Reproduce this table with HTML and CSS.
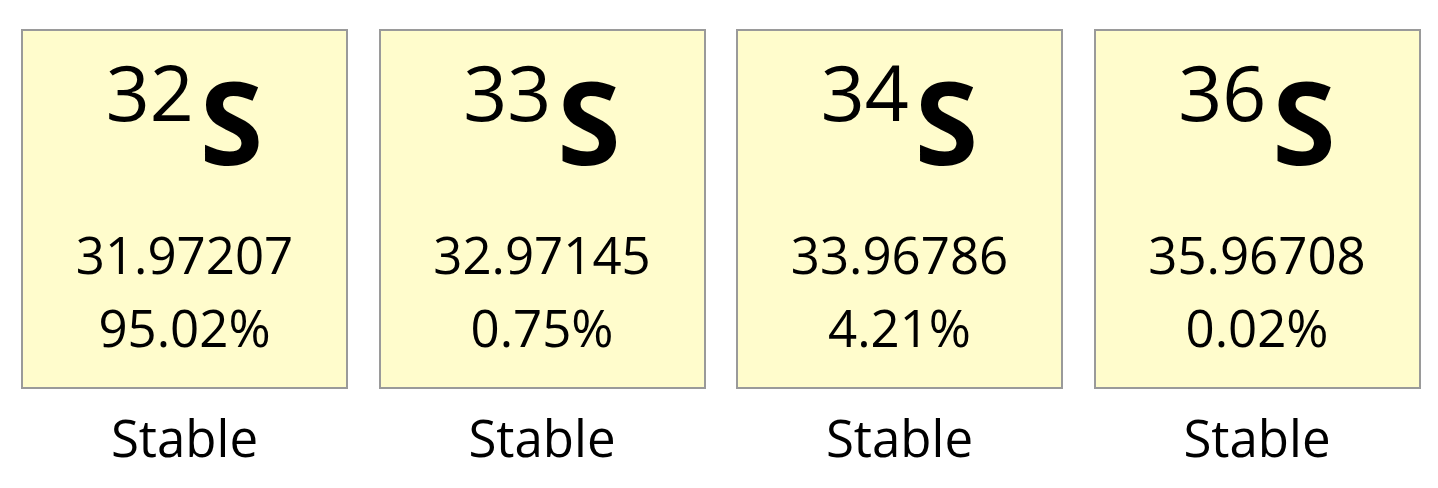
FILE: index.html
```html
<!DOCTYPE html>
<html>
<head>
<meta charset="utf-8">
<link rel="stylesheet" href="styles.css">
</head>
<body>
<div class="row">
  <div class="card">
    <div class="box">
      <div class="symbol"><span class="mass">32</span><span class="el">S</span></div>
      <div class="values"><div>31.97207</div><div>95.02%</div></div>
    </div>
    <div class="label">Stable</div>
  </div>
  <div class="card">
    <div class="box">
      <div class="symbol"><span class="mass">33</span><span class="el">S</span></div>
      <div class="values"><div>32.97145</div><div>0.75%</div></div>
    </div>
    <div class="label">Stable</div>
  </div>
  <div class="card">
    <div class="box">
      <div class="symbol"><span class="mass">34</span><span class="el">S</span></div>
      <div class="values"><div>33.96786</div><div>4.21%</div></div>
    </div>
    <div class="label">Stable</div>
  </div>
  <div class="card">
    <div class="box">
      <div class="symbol"><span class="mass">36</span><span class="el">S</span></div>
      <div class="values"><div>35.96708</div><div>0.02%</div></div>
    </div>
    <div class="label">Stable</div>
  </div>
</div>
</body>
</html>
```

FILE: styles.css
```css
html, body {
  margin: 0;
  padding: 0;
  background: #ffffff;
}
body {
  font-family: "Open Sans", "Noto Sans", sans-serif;
  color: #000;
}
.row {
  display: flex;
  gap: 30.5px;
  padding: 29px 0 0 21px;
}
.card {
  width: 327px;
  display: flex;
  flex-direction: column;
}
.box {
  box-sizing: border-box;
  height: 360px;
  border: 2px solid #9a9a9a;
  background: #fffccc;
  padding-top: 24.6px;
  text-align: center;
}
.symbol {
  font-size: 115px;
  font-weight: 700;
  line-height: 130px;
  white-space: nowrap;
}
.mass {
  font-size: 77px;
  font-weight: 400;
  line-height: 0;
  vertical-align: 44px;
  margin-right: 6px;
}
.el {
  font-size: 115px;
  font-weight: 700;
}
.values {
  margin-top: 32px;
  font-size: 51px;
  line-height: 73px;
}
.label {
  margin-top: 18px;
  text-align: center;
  font-size: 51px;
  line-height: 60px;
}
```
